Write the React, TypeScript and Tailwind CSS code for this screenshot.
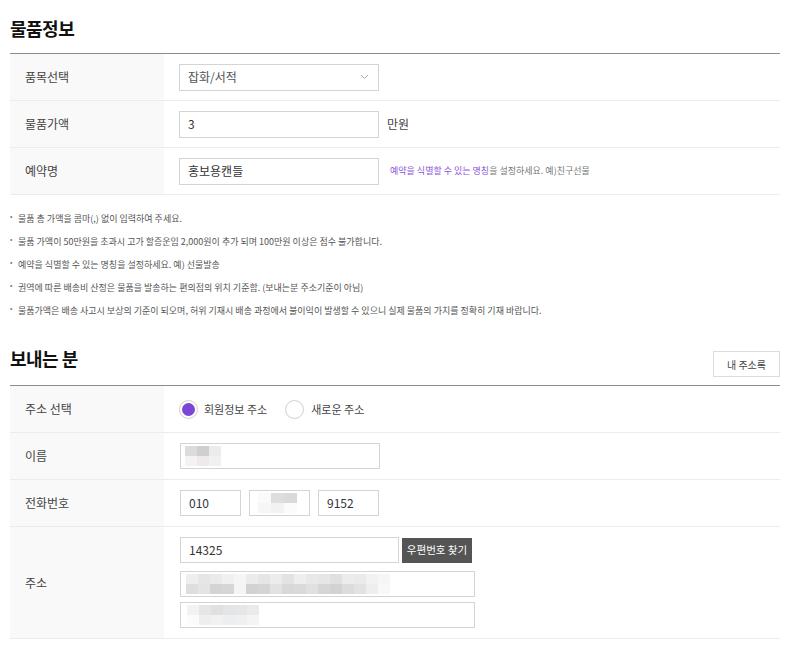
import React from 'react';

const font = { fontFamily: '"Noto Sans CJK KR", "Noto Sans", sans-serif' };

const nameBlur = [
  ['bg-[#dcdcdc]', 'bg-[#cfcfcf]', 'bg-[#ececec]'],
  ['bg-[#f3f3f3]', 'bg-[#eee9ec]', 'bg-[#f1f1f1]'],
];
const phoneBlur = [
  ['bg-[#fafafa]', 'bg-[#dedede]', 'bg-[#dadada]'],
  ['bg-[#f6f6f6]', 'bg-[#f2f2f2]', 'bg-[#fbfbfb]'],
];
const addr1Blur = [
  ['bg-[#eeeeee]', 'bg-[#e6e6e6]', 'bg-[#eaeaea]', 'bg-[#f0f0f0]', 'bg-[#f5f5f5]', 'bg-[#ebebeb]', 'bg-[#e5e5e5]', 'bg-[#ececec]', 'bg-[#e3e3e3]', 'bg-[#eeeeee]', 'bg-[#e8e8e8]', 'bg-[#e6e6e6]', 'bg-[#e0e0e0]', 'bg-[#ececec]', 'bg-[#eaeaea]', 'bg-[#f2f2f2]', 'bg-[#f6f6f6]'],
  ['bg-[#dedede]', 'bg-[#e4e4e4]', 'bg-[#d4d4d4]', 'bg-[#d6d6d6]', 'bg-[#f4f4f4]', 'bg-[#d2d2d2]', 'bg-[#d5d5d5]', 'bg-[#e2e2e2]', 'bg-[#d8d8d8]', 'bg-[#dadada]', 'bg-[#e0e0e0]', 'bg-[#d6d6d6]', 'bg-[#d2d2d2]', 'bg-[#dcdcdc]', 'bg-[#e2e2e2]', 'bg-[#eeeeee]', 'bg-[#f8f8f8]'],
];
const addr2Blur = [
  ['bg-[#f4f2ee]', 'bg-[#e6e6e6]', 'bg-[#e1e0e0]', 'bg-[#e3e5e7]', 'bg-[#e6e6e6]', 'bg-[#ebebeb]'],
  ['bg-[#fbfbfb]', 'bg-[#eeeeee]', 'bg-[#f1f1f1]', 'bg-[#eceef0]', 'bg-[#efefef]', 'bg-[#f4f4f4]'],
];

function Blur({ rows, cell }: { rows: string[][]; cell: string }) {
  return (
    <div className="flex flex-col">
      {rows.map((r, i) => (
        <div key={i} className="flex">
          {r.map((c, j) => (
            <div key={j} className={`${cell} ${c}`} />
          ))}
        </div>
      ))}
    </div>
  );
}

function Row({ label, children, tall }: { label: string; children: React.ReactNode; tall?: boolean }) {
  return (
    <div className={`flex border-b border-[#ececec] ${tall ? '' : 'h-[47px]'}`}>
      <div className="w-[154px] shrink-0 bg-[#f9f9f9] flex items-center pl-[15px] text-[12px] text-[#444]">{label}</div>
      <div className="flex-1 flex items-center pl-[15px]">{children}</div>
    </div>
  );
}

function Box({ w, children, h = 'h-[27px]' }: { w: string; children?: React.ReactNode; h?: string }) {
  return (
    <div className={`${w} ${h} border border-[#d4d4d4] bg-white flex items-center px-[8px] text-[12px] text-[#333]`}>
      {children}
    </div>
  );
}

const notes = [
  '물품 총 가액을 콤마(,) 없이 입력하여 주세요.',
  '물품 가액이 50만원을 초과시 고가 할증운임 2,000원이 추가 되며 100만원 이상은 접수 불가합니다.',
  '예약을 식별할 수 있는 명칭을 설정하세요. 예) 선물발송',
  '권역에 따른 배송비 산정은 물품을 발송하는 편의점의 위치 기준함. (보내는분 주소기준이 아님)',
  '물품가액은 배송 사고시 보상의 기준이 되오며, 허위 기재시 배송 과정에서 불이익이 발생할 수 있으니 실제 물품의 가치를 정확히 기재 바랍니다.',
];

export default function App() {
  return (
    <div style={font} className="w-[800px] h-[649px] bg-white px-[10px] overflow-hidden">
      <div className="w-[770px]">
        {/* 물품정보 */}
        <div className="pt-[16px] pb-[13px]">
          <h2 className="text-[18px] leading-[24px] font-bold text-[#111] tracking-[-0.5px]">물품정보</h2>
        </div>
        <div className="border-t border-[#8c8c8c]">
          <Row label="품목선택">
            <Box w="w-[200px]">
              <span className="flex-1 text-[#555]">잡화/서적</span>
              <svg width="9" height="6" viewBox="0 0 9 6" className="mr-[1px]">
                <path d="M1 1l3.5 3.5L8 1" fill="none" stroke="#aaa" strokeWidth="1" />
              </svg>
            </Box>
          </Row>
          <Row label="물품가액">
            <Box w="w-[200px]">3</Box>
            <span className="ml-[8px] text-[12px] text-[#444]">만원</span>
          </Row>
          <Row label="예약명">
            <Box w="w-[200px]">홍보용캔들</Box>
            <span className="ml-[11px] text-[9px] text-[#777]">
              <span className="text-[#8a55d8]">예약을 식별할 수 있는 명칭</span>을 설정하세요. 예)친구선물
            </span>
          </Row>
        </div>

        <ul className="pt-[12px]">
          {notes.map((n) => (
            <li key={n} className="flex h-[23px] items-center text-[9px] text-[#555]">
              <span className="w-[8px] -mt-[4px] text-[7px] text-[#777]">•</span>
              {n}
            </li>
          ))}
        </ul>

        {/* 보내는 분 */}
        <div className="mt-[24px] flex items-end justify-between">
          <h2 className="mb-[15px] text-[18px] leading-[24px] font-bold text-[#111] tracking-[-0.5px]">보내는 분</h2>
          <button className="mb-[8px] h-[26px] w-[67px] border border-[#dcdcdc] bg-white text-[10px] text-[#444]">
            내 주소록
          </button>
        </div>
        <div className="border-t border-[#8c8c8c]">
          <Row label="주소 선택">
            <label className="flex items-center">
              <span className="w-[19px] h-[19px] rounded-full border border-[#cfcfcf] bg-white flex items-center justify-center">
                <span className="w-[13px] h-[13px] rounded-full bg-[#7b45d6]" />
              </span>
              <span className="ml-[6px] text-[11px] text-[#444]">회원정보 주소</span>
            </label>
            <label className="flex items-center ml-[18px]">
              <span className="w-[19px] h-[19px] rounded-full border border-[#cfcfcf] bg-white" />
              <span className="ml-[7px] text-[11px] text-[#444]">새로운 주소</span>
            </label>
          </Row>
          <Row label="이름">
            <div className="pl-[1px]">
              <Box w="w-[200px]" h="h-[26px]">
                <div className="-ml-[4px]">
                  <Blur rows={nameBlur} cell="w-[12px] h-[10px]" />
                </div>
              </Box>
            </div>
          </Row>
          <Row label="전화번호">
            <div className="pl-[1px] flex gap-[8px]">
              <Box w="w-[61px]" h="h-[26px]">010</Box>
              <Box w="w-[61px]" h="h-[26px]">
                <Blur rows={phoneBlur} cell="w-[13px] h-[10px]" />
              </Box>
              <Box w="w-[61px]" h="h-[26px]">9152</Box>
            </div>
          </Row>
          <Row label="주소" tall>
            <div className="pl-[1px] py-[10px] flex flex-col">
              <div className="flex items-center">
                <Box w="w-[219px]" h="h-[26px]">14325</Box>
                <button className="ml-[3px] h-[25px] w-[70px] bg-[#555] text-white text-[10.5px]">우편번호 찾기</button>
              </div>
              <div className="mt-[8px]">
                <Box w="w-[295px]" h="h-[26px]">
                  <div className="-ml-[3px]">
                    <Blur rows={addr1Blur} cell="w-[12px] h-[10px]" />
                  </div>
                </Box>
              </div>
              <div className="mt-[5px]">
                <Box w="w-[295px]" h="h-[26px]">
                  <div className="-ml-[2px]">
                    <Blur rows={addr2Blur} cell="w-[12px] h-[10px]" />
                  </div>
                </Box>
              </div>
            </div>
          </Row>
        </div>
      </div>
    </div>
  );
}
